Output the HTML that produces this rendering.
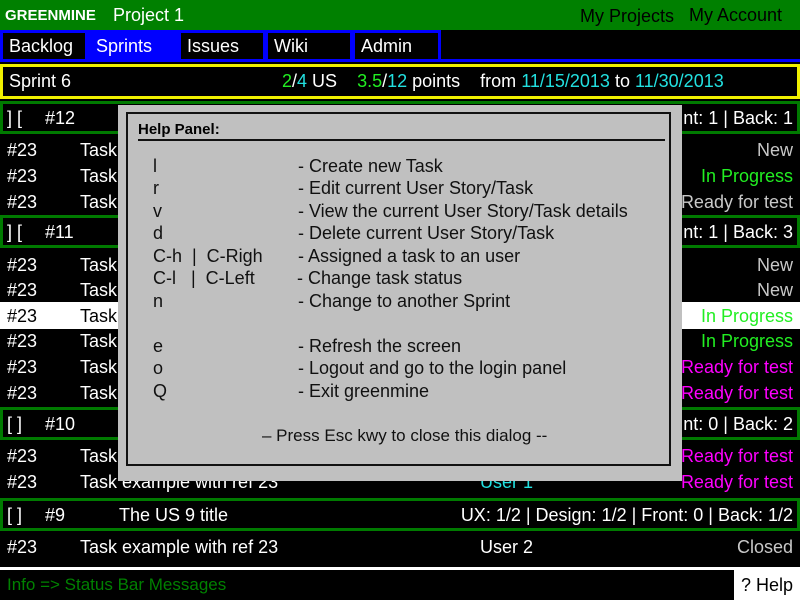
<!DOCTYPE html>
<html><head><meta charset="utf-8">
<style>
*{margin:0;padding:0;box-sizing:border-box}
body{width:800px;height:600px;background:#000;position:relative;overflow:hidden;font-family:"Liberation Sans",sans-serif;font-size:18px;color:#fff}
.a{position:absolute;line-height:20px;white-space:nowrap}
.r{position:absolute;right:7px;line-height:20px;white-space:nowrap;text-align:right}
.box{position:absolute}
.us{position:absolute;left:0;width:800px;height:33px;border:3px solid #007a00;background:#000}
.gray{color:#c8c8c8}.grn{color:#22ee22}.mag{color:#ff00ff}.cy{color:#22e0e0}
.tab{position:absolute;top:30px;height:32px;border:3px solid #0000ff;background:#000;padding-left:6px;line-height:26px}
</style></head><body>
<div class="box" style="left:0;top:0;width:800px;height:30px;background:#008000"></div>
<div class="a" style="left:5px;top:6px;font-weight:bold;font-size:15px">GREENMINE</div>
<div class="a" style="left:113px;top:5px">Project 1</div>
<div class="a" style="left:580px;top:6px;color:#000">My Projects</div>
<div class="a" style="left:689px;top:5px;color:#000">My Account</div>

<div class="box" style="left:0;top:59px;width:800px;height:3px;background:#0000ff"></div>
<div class="tab" style="left:0;width:88px">Backlog</div>
<div class="tab" style="left:87px;width:92px;background:#0000ff">Sprints</div>
<div class="tab" style="left:178px;width:88px">Issues</div>
<div class="tab" style="left:265px;width:88px">Wiki</div>
<div class="tab" style="left:352px;width:89px">Admin</div>

<div class="box" style="left:0;top:64px;width:800px;height:35px;border:3px solid #f0f000"></div>
<div class="a" style="left:9px;top:71px">Sprint 6</div>
<div class="a" style="left:282px;top:71px"><span class="grn">2</span>/<span class="cy">4</span> US&nbsp;&nbsp;&nbsp; <span class="grn">3.5</span>/<span class="cy">12</span> points&nbsp;&nbsp;&nbsp; from <span class="cy">11/15/2013</span> to <span class="cy">11/30/2013</span></div>

<div class="us" style="top:101px"></div>
<div class="a" style="left:7px;top:108px">] [</div><div class="a" style="left:45px;top:108px">#12</div>
<div class="r" style="top:108px">nt: 1 | Back: 1</div>
<div class="a" style="left:7px;top:140px">#23</div><div class="a" style="left:80px;top:140px">Task</div><div class="r gray" style="top:140px">New</div>
<div class="a" style="left:7px;top:166px">#23</div><div class="a" style="left:80px;top:166px">Task</div><div class="r grn" style="top:166px">In Progress</div>
<div class="a" style="left:7px;top:192px">#23</div><div class="a" style="left:80px;top:192px">Task</div><div class="r gray" style="top:192px">Ready for test</div>

<div class="us" style="top:215px"></div>
<div class="a" style="left:7px;top:222px">] [</div><div class="a" style="left:45px;top:222px">#11</div>
<div class="r" style="top:222px">nt: 1 | Back: 3</div>
<div class="a" style="left:7px;top:255px">#23</div><div class="a" style="left:80px;top:255px">Task</div><div class="r gray" style="top:255px">New</div>
<div class="a" style="left:7px;top:280px">#23</div><div class="a" style="left:80px;top:280px">Task</div><div class="r gray" style="top:280px">New</div>
<div class="box" style="left:0;top:302px;width:800px;height:27px;background:#fff"></div>
<div class="a" style="left:7px;top:306px;color:#000">#23</div><div class="a" style="left:80px;top:306px;color:#000">Task</div><div class="r grn" style="top:306px">In Progress</div>
<div class="a" style="left:7px;top:331px">#23</div><div class="a" style="left:80px;top:331px">Task</div><div class="r grn" style="top:331px">In Progress</div>
<div class="a" style="left:7px;top:357px">#23</div><div class="a" style="left:80px;top:357px">Task</div><div class="r mag" style="top:357px">Ready for test</div>
<div class="a" style="left:7px;top:383px">#23</div><div class="a" style="left:80px;top:383px">Task</div><div class="r mag" style="top:383px">Ready for test</div>

<div class="us" style="top:407px"></div>
<div class="a" style="left:7px;top:414px">[ ]</div><div class="a" style="left:45px;top:414px">#10</div>
<div class="r" style="top:414px">nt: 0 | Back: 2</div>
<div class="a" style="left:7px;top:446px">#23</div><div class="a" style="left:80px;top:446px">Task</div><div class="r mag" style="top:446px">Ready for test</div>
<div class="a" style="left:7px;top:472px">#23</div><div class="a" style="left:80px;top:472px">Task example with ref 23</div><div class="a cy" style="left:480px;top:472px">User 1</div><div class="r mag" style="top:472px">Ready for test</div>

<div class="us" style="top:498px"></div>
<div class="a" style="left:7px;top:505px">[ ]</div><div class="a" style="left:45px;top:505px">#9</div>
<div class="a" style="left:119px;top:505px">The US 9 title</div>
<div class="r" style="top:505px">UX: 1/2 | Design: 1/2 | Front: 0 | Back: 1/2</div>
<div class="a" style="left:7px;top:537px">#23</div><div class="a" style="left:80px;top:537px">Task example with ref 23</div><div class="a" style="left:480px;top:537px">User 2</div><div class="r gray" style="top:537px">Closed</div>

<div class="box" style="left:0;top:567px;width:800px;height:3px;background:#fff"></div>
<div class="box" style="left:734px;top:567px;width:66px;height:33px;background:#fff"></div>
<div class="a" style="left:7px;top:575px;color:#008000;font-size:17px">Info =&gt; Status Bar Messages</div>
<div class="a" style="left:741px;top:575px;color:#000">? Help</div>

<div class="box" style="left:118px;top:105px;width:564px;height:376px;background:#c0c0c0"></div>
<div class="box" style="left:126px;top:112px;width:545px;height:354px;border:2px solid #111"></div>
<div class="a" style="left:138px;top:120px;color:#000;font-weight:bold;font-size:15px">Help Panel:</div>
<div class="box" style="left:138px;top:139px;width:527px;height:2px;background:#111"></div>
<div style="color:#111">
<div class="a" style="left:153px;top:156px">l</div><div class="a" style="left:298px;top:156px">- Create new Task</div>
<div class="a" style="left:153px;top:178px">r</div><div class="a" style="left:298px;top:178px">- Edit current User Story/Task</div>
<div class="a" style="left:153px;top:201px">v</div><div class="a" style="left:298px;top:201px">- View the current User Story/Task details</div>
<div class="a" style="left:153px;top:223px">d</div><div class="a" style="left:298px;top:223px">- Delete current User Story/Task</div>
<div class="a" style="left:153px;top:246px">C-h&nbsp; |&nbsp; C-Righ</div><div class="a" style="left:298px;top:246px">- Assigned a task to an user</div>
<div class="a" style="left:153px;top:268px">C-l&nbsp;&nbsp; |&nbsp; C-Left</div><div class="a" style="left:297px;top:268px">- Change task status</div>
<div class="a" style="left:153px;top:291px">n</div><div class="a" style="left:298px;top:291px">- Change to another Sprint</div>
<div class="a" style="left:153px;top:336px">e</div><div class="a" style="left:298px;top:336px">- Refresh the screen</div>
<div class="a" style="left:153px;top:358px">o</div><div class="a" style="left:298px;top:358px">- Logout and go to the login panel</div>
<div class="a" style="left:153px;top:381px">Q</div><div class="a" style="left:298px;top:381px">- Exit greenmine</div>
<div class="a" style="left:262px;top:426px;font-size:17px">– Press Esc kwy to close this dialog --</div>
</div>
</body></html>
